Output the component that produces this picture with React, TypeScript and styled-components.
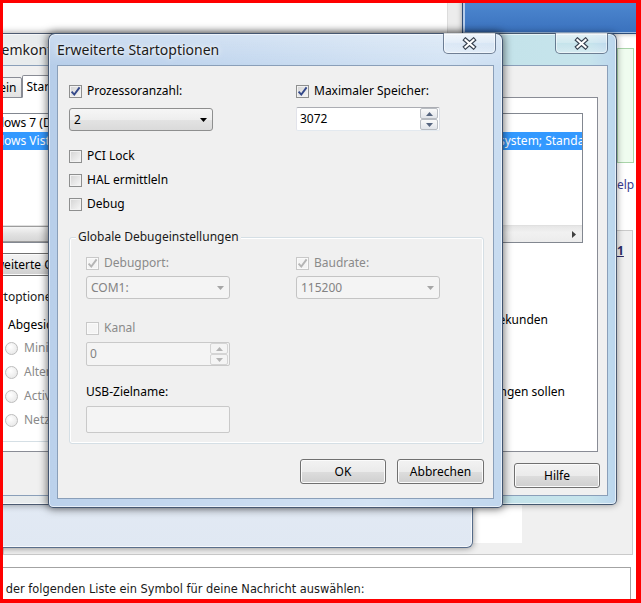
import React from 'react';
import styled, { createGlobalStyle } from 'styled-components';

const UI = `'Noto Sans', 'Open Sans', 'DejaVu Sans', sans-serif`;

const GlobalStyle = createGlobalStyle`
  * { box-sizing: border-box; }
  html, body { margin: 0; padding: 0; background: #fff; }
  body { overflow: hidden; }
`;

const Screen = styled.div`
  position: relative;
  width: 641px;
  height: 603px;
  overflow: hidden;
  border-style: solid;
  border-color: #ff0000;
  border-width: 3px 5px 4px 3px;
  background: #fff;
  font-family: ${UI};
  font-size: 12px;
  line-height: 16px;
  color: #000;
`;

/* ---------- page behind the windows ---------- */

const Page = styled.div`
  display: flex;
  flex-direction: column;
  height: 100%;
`;

const Upper = styled.div`
  display: flex;
  height: 227px;
  flex-shrink: 0;
`;

const Blank = styled.div`
  flex: 1;
`;

const Side = styled.div`
  width: 20px;
  display: flex;
  flex-direction: column;
  align-items: flex-start;
`;

const GreenBox = styled.div`
  width: 17px;
  height: 115px;
  margin: 45px 0 0 1px;
  border: 1px solid #a9d4a9;
  background: #effcef;
`;

const HelpLink = styled.span`
  margin: 14px 0 0 -8px;
  color: #3b3b8f;
  white-space: nowrap;
`;

const Board = styled.div`
  display: flex;
  align-items: flex-start;
  height: 325px;
  flex-shrink: 0;
  margin-right: 3px;
  padding-bottom: 11px;
  border: 1px solid #cacaca;
  background: #f0f0f0;
`;

const Editor = styled.div`
  align-self: stretch;
  width: 518px;
  background: #fff;
`;

const PageLink = styled.span`
  margin: 12px 0 0 95px;
  font-weight: bold;
  text-decoration: underline;
  color: #2b2b66;
`;

const Footer = styled.div`
  flex: 1;
  padding-top: 12px;
`;

const NoteBox = styled.div`
  height: 100%;
  margin: 0 5px 0 -25px;
  padding: 14px 0 0 4px;
  border-top: 1px solid #a3a3a3;
  border-right: 1px solid #a3a3a3;
  font-family: 'DejaVu Sans', Verdana, sans-serif;
  font-size: 11.4px;
  line-height: 15px;
  color: #1a1a1a;
  white-space: nowrap;
`;

/* ---------- windows ---------- */

const BackWin = styled.div`
  position: absolute;
  z-index: 1;
  left: -13px;
  top: -23px;
  width: 483px;
  height: 568px;
  display: flex;
  flex-direction: column;
  padding-right: 8px;
  border: 1px solid rgba(50, 75, 110, 0.8);
  border-radius: 0 0 6px 6px;
  background: linear-gradient(#f9fbfd, #e0e8f3);
  box-shadow: 0 0 7px rgba(0, 0, 0, 0.45), inset 0 0 0 1px rgba(255, 255, 255, 0.7);
`;

const BackContent = styled.div`
  flex: 1;
  display: flex;
  justify-content: flex-end;
  margin-bottom: 42px;
  background: #fff;
`;

const ScrollStrip = styled.div`
  width: 17px;
  background: #ececec;
  border-left: 1px solid #dcdcdc;
`;

const TopWin = styled.div`
  position: absolute;
  z-index: 2;
  left: 459px;
  top: -23px;
  width: 240px;
  height: 54px;
  border: 1px solid #2d4c78;
  background: linear-gradient(#5f97d9, #4a84cd 50%, #3a71bd);
  box-shadow: inset 2px 0 0 #b7cde9, inset 0 -1px 0 #9dbbe0, 0 0 5px rgba(0, 0, 0, 0.35);
`;

const Win = styled.div<{ $layer: number }>`
  position: absolute;
  z-index: ${p => p.$layer};
  display: flex;
  flex-direction: column;
  padding: 0 8px 8px;
  border: 1px solid rgba(24, 42, 70, 0.75);
  border-radius: 7px 7px 5px 5px;
`;

const SysWin = styled(Win)`
  left: -63px;
  top: 30px;
  width: 677px;
  height: 472px;
  background: linear-gradient(90deg, #e9eced 0%, #e3e9ec 62%, #c4e3ea 84%, #c6e4ec 96%, #bcd6ee 100%);
  box-shadow: 0 0 7px rgba(0, 0, 0, 0.4), inset 0 0 0 1px rgba(255, 255, 255, 0.6);
`;

const DialogWin = styled(Win)`
  left: 45px;
  top: 30px;
  width: 455px;
  height: 475px;
  background:
    linear-gradient(180deg, rgba(255, 255, 255, 0.3), rgba(255, 255, 255, 0) 32px),
    linear-gradient(100deg, #b6cde9 0%, #c4d8ef 40%, #d3e3f4 75%, #c1d7ee 100%);
  box-shadow: 0 0 9px 1px rgba(0, 0, 0, 0.55), inset 0 0 0 1px rgba(255, 255, 255, 0.6);
`;

const TitleBar = styled.div<{ $indent: number }>`
  height: 31px;
  flex-shrink: 0;
  display: flex;
  align-items: center;
  padding-left: ${p => p.$indent}px;
  font-size: 14px;
  color: #1b1b1b;
  white-space: nowrap;
  text-shadow: 0 0 7px #fff, 0 0 3px rgba(255, 255, 255, 0.8);
`;

const CloseButton = styled.div<{ $right: number }>`
  position: absolute;
  top: -1px;
  right: ${p => p.$right}px;
  width: 53px;
  height: 21px;
  display: flex;
  align-items: center;
  justify-content: center;
  border: 1px solid rgba(45, 65, 95, 0.65);
  border-top: none;
  border-radius: 0 0 5px 5px;
  background: linear-gradient(rgba(255, 255, 255, 0.55), rgba(255, 255, 255, 0.2) 50%, rgba(255, 255, 255, 0) 51%, rgba(255, 255, 255, 0.3));
  box-shadow: inset 0 0 0 1px rgba(255, 255, 255, 0.5);
`;

const CloseGlyph = () => (
  <svg width="15" height="13" viewBox="0 0 15 13">
    <path d="M3.5 3 L11.5 10 M11.5 3 L3.5 10" stroke="#36414f" strokeWidth="4.4" strokeLinecap="square" fill="none" />
    <path d="M3.5 3 L11.5 10 M11.5 3 L3.5 10" stroke="#ffffff" strokeWidth="2.2" strokeLinecap="square" fill="none" />
  </svg>
);

const Client = styled.div`
  flex: 1;
  display: flex;
  flex-direction: column;
  border: 1px solid #8a9fb9;
  background: #f0f0f0;
`;

const DialogBody = styled(Client)`
  padding: 18px 9px 14px 11px;
`;

const SysBody = styled(Client)`
  padding: 9px 9px 7px 5px;
`;

/* ---------- controls ---------- */

const CheckRow = styled.div<{ $top?: number; $disabled?: boolean }>`
  display: flex;
  align-items: center;
  gap: 5px;
  height: 14px;
  margin-top: ${p => p.$top ?? 0}px;
  color: ${p => (p.$disabled ? '#8a8a8a' : '#000')};
  white-space: nowrap;
`;

const Box = styled.span<{ $disabled?: boolean }>`
  width: 13px;
  height: 13px;
  flex-shrink: 0;
  display: inline-flex;
  align-items: center;
  justify-content: center;
  border: 1px solid ${p => (p.$disabled ? '#c8c8c8' : '#8e8f8f')};
  background: ${p => (p.$disabled ? '#f4f4f4' : 'linear-gradient(135deg, #d3d3d3, #f8f8f8)')};
  box-shadow: inset 0 0 0 1px ${p => (p.$disabled ? '#fafafa' : '#f2f2f2')};
`;

const Tick = ({ color }: { color: string }) => (
  <svg width="11" height="11" viewBox="0 0 11 11">
    <path d="M1.6 5.6 L4.3 8.6 L9.6 1.4" fill="none" stroke={color} strokeWidth="1.9" />
  </svg>
);

type CheckProps = { label: React.ReactNode; checked?: boolean; disabled?: boolean; top?: number };

const Check = ({ label, checked, disabled, top }: CheckProps) => (
  <CheckRow $top={top} $disabled={disabled}>
    <Box $disabled={disabled}>{checked && <Tick color={disabled ? '#b5b5b5' : '#34498a'} />}</Box>
    {label}
  </CheckRow>
);

const Select = styled.div<{ $top: number; $disabled?: boolean }>`
  width: 144px;
  height: 23px;
  margin-top: ${p => p.$top}px;
  display: flex;
  align-items: center;
  justify-content: space-between;
  padding: 0 5px 0 4px;
  border: 1px solid ${p => (p.$disabled ? '#c4c4c4' : '#8e8f8f')};
  border-radius: 3px;
  background: ${p =>
    p.$disabled ? '#f4f4f4' : 'linear-gradient(#f6f6f6 0%, #eeeeee 50%, #e3e3e3 51%, #dadada 100%)'};
  color: ${p => (p.$disabled ? '#838383' : '#000')};
`;

const Arrow = ({ up, color }: { up?: boolean; color: string }) => (
  <svg width="7" height="4" viewBox="0 0 7 4">
    <path d={up ? 'M0 4 L3.5 0 L7 4 Z' : 'M0 0 L7 0 L3.5 4 Z'} fill={color} />
  </svg>
);

const SpinField = styled.div<{ $top: number; $disabled?: boolean }>`
  width: 144px;
  height: 24px;
  margin-top: ${p => p.$top}px;
  display: flex;
  align-items: center;
  justify-content: space-between;
  padding: 0 1px 0 3px;
  border: 1px solid;
  border-color: ${p => (p.$disabled ? '#c9c9c9' : '#abadb3 #dbdfe6 #e3e9ef #e2e3ea')};
  border-radius: 2px;
  background: ${p => (p.$disabled ? '#f4f4f4' : '#fff')};
  color: ${p => (p.$disabled ? '#838383' : '#000')};
`;

const Stepper = styled.div`
  display: flex;
  flex-direction: column;
  width: 18px;
  height: 22px;
`;

const StepButton = styled.span<{ $disabled?: boolean }>`
  flex: 1;
  display: flex;
  align-items: center;
  justify-content: center;
  border: 1px solid ${p => (p.$disabled ? '#d4d4d4' : '#b8bcc2')};
  border-radius: 2px;
  background: ${p => (p.$disabled ? '#f4f4f4' : 'linear-gradient(#fafafa, #e2e5ea)')};
`;

const Spin = ({ value, top, disabled }: { value: string; top: number; disabled?: boolean }) => {
  const c = disabled ? '#b4b4b4' : '#56657f';
  return (
    <SpinField $top={top} $disabled={disabled}>
      {value}
      <Stepper>
        <StepButton $disabled={disabled}><Arrow up color={c} /></StepButton>
        <StepButton $disabled={disabled}><Arrow color={c} /></StepButton>
      </Stepper>
    </SpinField>
  );
};

const TextField = styled.div<{ $top: number }>`
  width: 144px;
  height: 27px;
  margin-top: ${p => p.$top}px;
  border: 1px solid #c9c9c9;
  border-radius: 2px;
  background: #f4f4f4;
`;

const Button = styled.button<{ $w: number; $h?: number }>`
  width: ${p => p.$w}px;
  height: ${p => p.$h ?? 25}px;
  flex-shrink: 0;
  padding: 0;
  border: 1px solid #707070;
  border-radius: 3px;
  background: linear-gradient(#f2f2f2 0%, #ebebeb 50%, #dddddd 51%, #cfcfcf 100%);
  box-shadow: inset 0 0 0 1px #fbfbfb;
  font: 12px/16px ${UI};
  color: #000;
  white-space: nowrap;
  overflow: hidden;
`;

const PanelButton = styled(Button)`
  align-self: flex-start;
  margin: 10px 0 0 4px;
`;

/* ---------- dialog layout ---------- */

const TopGrid = styled.div`
  display: grid;
  grid-template-columns: 227px 144px;
`;

const Column = styled.div`
  display: flex;
  flex-direction: column;
  align-items: flex-start;
`;

const Group = styled.div`
  position: relative;
  height: 207px;
  margin-top: 26px;
  padding: 18px 0 0 16px;
  border: 1px solid #d5dfe5;
  border-radius: 3px;
  box-shadow: inset 0 0 0 1px #fff;
  display: grid;
  grid-template-columns: 210px 144px;
  align-content: start;
`;

const GroupTitle = styled.span<{ $bg: string; $left: number }>`
  position: absolute;
  top: -9px;
  left: ${p => p.$left}px;
  padding: 0 2px;
  background: ${p => p.$bg};
  color: #1a1a1a;
  white-space: nowrap;
`;

const FieldLabel = styled.div<{ $top: number }>`
  margin-top: ${p => p.$top}px;
  color: #000;
`;

const ButtonRow = styled.div<{ $gap: number }>`
  display: flex;
  justify-content: flex-end;
  gap: ${p => p.$gap}px;
  margin-top: auto;
`;

/* ---------- msconfig layout ---------- */

const Tabs = styled.div`
  position: relative;
  z-index: 1;
  display: flex;
  align-items: flex-end;
  height: 23px;
  margin-bottom: -1px;
`;

const Tab = styled.span<{ $active?: boolean }>`
  height: ${p => (p.$active ? 23 : 21)}px;
  display: flex;
  align-items: center;
  padding: 0 4px;
  border: 1px solid #898c95;
  border-bottom-color: ${p => (p.$active ? '#fff' : '#898c95')};
  border-radius: 2px 2px 0 0;
  background: ${p => (p.$active ? '#fff' : 'linear-gradient(#f3f3f3, #e2e2e2)')};
  white-space: nowrap;
`;

const TabPanel = styled.div`
  flex: 1;
  display: flex;
  flex-direction: column;
  padding: 15px 14px 0 16px;
  border: 1px solid #898c95;
  background: #fff;
`;

const ListBox = styled.div`
  height: 130px;
  display: flex;
  flex-direction: column;
  border: 1px solid #828790;
  background: #fff;
  overflow: hidden;
`;

const ListItem = styled.div<{ $selected?: boolean }>`
  height: 18px;
  flex-shrink: 0;
  display: flex;
  align-items: center;
  padding-left: 2px;
  white-space: nowrap;
  background: ${p => (p.$selected ? '#3399ff' : 'transparent')};
  color: ${p => (p.$selected ? '#fff' : '#000')};
`;

const ItemTail = styled.span<{ $offset: number }>`
  margin-left: ${p => p.$offset}px;
`;

const HScroll = styled.div`
  margin-top: auto;
  height: 17px;
  flex-shrink: 0;
  display: flex;
  align-items: stretch;
  justify-content: space-between;
  background: linear-gradient(#e6e6e6, #f1f1f1 40%, #ececec);
  border-top: 1px solid #e0e0e0;
`;

const ScrollThumb = styled.div`
  width: 400px;
  margin-left: 17px;
  border: 1px solid #9c9c9c;
  border-radius: 2px;
  background: linear-gradient(#f5f5f5, #e2e2e2 50%, #d6d6d6);
`;

const ScrollArrow = styled.span`
  width: 17px;
  display: flex;
  align-items: center;
  justify-content: center;
`;

const LowerRow = styled.div`
  display: flex;
  align-items: flex-start;
`;

const StartGroup = styled.div`
  position: relative;
  width: 330px;
  height: 145px;
  margin: 21px 0 0 6px;
  padding: 20px 0 0 11px;
  border: 1px solid #d5dfe5;
  border-radius: 3px;
`;

const RadioList = styled.div`
  display: flex;
  flex-direction: column;
  gap: 10px;
  margin: 9px 0 0 15px;
`;

const RadioRow = styled.div`
  display: flex;
  align-items: center;
  gap: 6px;
  height: 14px;
  color: #8a8a8a;
  white-space: nowrap;
`;

const RadioDot = styled.span`
  width: 13px;
  height: 13px;
  border-radius: 50%;
  border: 1px solid #bdbdbd;
  background: radial-gradient(circle at 40% 35%, #ffffff, #e3e3e3);
`;

const RightCol = styled.div`
  margin-left: auto;
  display: flex;
  flex-direction: column;
  align-items: flex-end;
`;

const TimeoutRow = styled.div`
  display: flex;
  align-items: center;
  gap: 6px;
  height: 20px;
  margin: 34px 35px 0 0;
  white-space: nowrap;
`;

const TimeoutInput = styled.span`
  width: 60px;
  height: 20px;
  padding: 1px 3px;
  border: 1px solid #abadb3;
  background: #fff;
`;

const PermRow = styled.div`
  display: flex;
  align-items: flex-start;
  gap: 5px;
  margin: 54px 18px 0 0;
  white-space: nowrap;
`;

const SysButtons = styled.div`
  display: flex;
  justify-content: flex-end;
  gap: 6px;
  margin: 11px -2px 0 0;
`;

const Spacer = styled.span<{ $w: number }>`
  width: ${p => p.$w}px;
`;

export default function App() {
  return (
    <>
      <GlobalStyle />
      <Screen>
        <Page>
          <Upper>
            <Blank />
            <Side>
              <GreenBox />
              <HelpLink>Help</HelpLink>
            </Side>
          </Upper>
          <Board>
            <Editor />
            <PageLink>1</PageLink>
          </Board>
          <Footer>
            <NoteBox>aus der folgenden Liste ein Symbol für deine Nachricht auswählen:</NoteBox>
          </Footer>
        </Page>

        <BackWin>
          <BackContent>
            <ScrollStrip />
          </BackContent>
        </BackWin>

        <TopWin />

        <SysWin $layer={3}>
          <TitleBar $indent={26}>Systemkonfiguration</TitleBar>
          <CloseButton $right={8}>
            <CloseGlyph />
          </CloseButton>
          <SysBody>
            <Tabs>
              <Tab>Allgemein</Tab>
              <Tab $active>Start</Tab>
              <Tab>Dienste</Tab>
              <Tab>Systemstart</Tab>
              <Tab>Tools</Tab>
            </Tabs>
            <TabPanel>
              <ListBox>
                <ListItem>Windows 7 (D:\Windows)</ListItem>
                <ListItem $selected>
                  Windows Vista (C:\Windows) :
                  <ItemTail $offset={258}>Aktuelles Betriebssystem; Standardbetriebssystem</ItemTail>
                </ListItem>
                <HScroll>
                  <ScrollThumb />
                  <ScrollArrow>
                    <svg width="4" height="7" viewBox="0 0 4 7">
                      <path d="M0 0 L4 3.5 L0 7 Z" fill="#3f3f3f" />
                    </svg>
                  </ScrollArrow>
                </HScroll>
              </ListBox>
              <PanelButton $w={138} $h={23}>Erweiterte Optionen...</PanelButton>
              <LowerRow>
                <StartGroup>
                  <GroupTitle $bg="#fff" $left={0}>Startoptionen</GroupTitle>
                  <Check label="Abgesichert" />
                  <RadioList>
                    {['Minimal', 'Alternative Shell', 'Active Directory-Reparatur', 'Netzwerk'].map(r => (
                      <RadioRow key={r}>
                        <RadioDot />
                        {r}
                      </RadioRow>
                    ))}
                  </RadioList>
                </StartGroup>
                <RightCol>
                  <TimeoutRow>
                    Timeout:
                    <TimeoutInput>30</TimeoutInput>
                    Sekunden
                  </TimeoutRow>
                  <PermRow>
                    <Box />
                    <span>
                      Alle Starteinstellungen sollen
                      <br />
                      dauerhaft sein
                    </span>
                  </PermRow>
                </RightCol>
              </LowerRow>
            </TabPanel>
            <SysButtons>
              <Button $w={86}>OK</Button>
              <Button $w={86}>Abbrechen</Button>
              <Button $w={86}>Übernehmen</Button>
              <Spacer $w={4} />
              <Button $w={86}>Hilfe</Button>
            </SysButtons>
          </SysBody>
        </SysWin>

        <DialogWin $layer={4}>
          <TitleBar $indent={0}>Erweiterte Startoptionen</TitleBar>
          <CloseButton $right={6}>
            <CloseGlyph />
          </CloseButton>
          <DialogBody>
            <TopGrid>
              <Column>
                <Check label="Prozessoranzahl:" checked />
                <Select $top={10}>
                  2
                  <Arrow color="#000" />
                </Select>
              </Column>
              <Column>
                <Check label="Maximaler Speicher:" checked />
                <Spin value="3072" top={9} />
              </Column>
            </TopGrid>
            <Check label="PCI Lock" top={18} />
            <Check label="HAL ermittleln" top={10} />
            <Check label="Debug" top={10} />
            <Group>
              <GroupTitle $bg="#f0f0f0" $left={6}>Globale Debugeinstellungen</GroupTitle>
              <Column>
                <Check label="Debugport:" checked disabled />
                <Select $top={6} $disabled>
                  COM1:
                  <Arrow color="#a6a6a6" />
                </Select>
                <Check label="Kanal" disabled top={22} />
                <Spin value="0" top={7} disabled />
                <FieldLabel $top={18}>USB-Zielname:</FieldLabel>
                <TextField $top={6} />
              </Column>
              <Column>
                <Check label="Baudrate:" checked disabled />
                <Select $top={6} $disabled>
                  115200
                  <Arrow color="#a6a6a6" />
                </Select>
              </Column>
            </Group>
            <ButtonRow $gap={11}>
              <Button $w={86}>OK</Button>
              <Button $w={87}>Abbrechen</Button>
            </ButtonRow>
          </DialogBody>
        </DialogWin>
      </Screen>
    </>
  );
}
